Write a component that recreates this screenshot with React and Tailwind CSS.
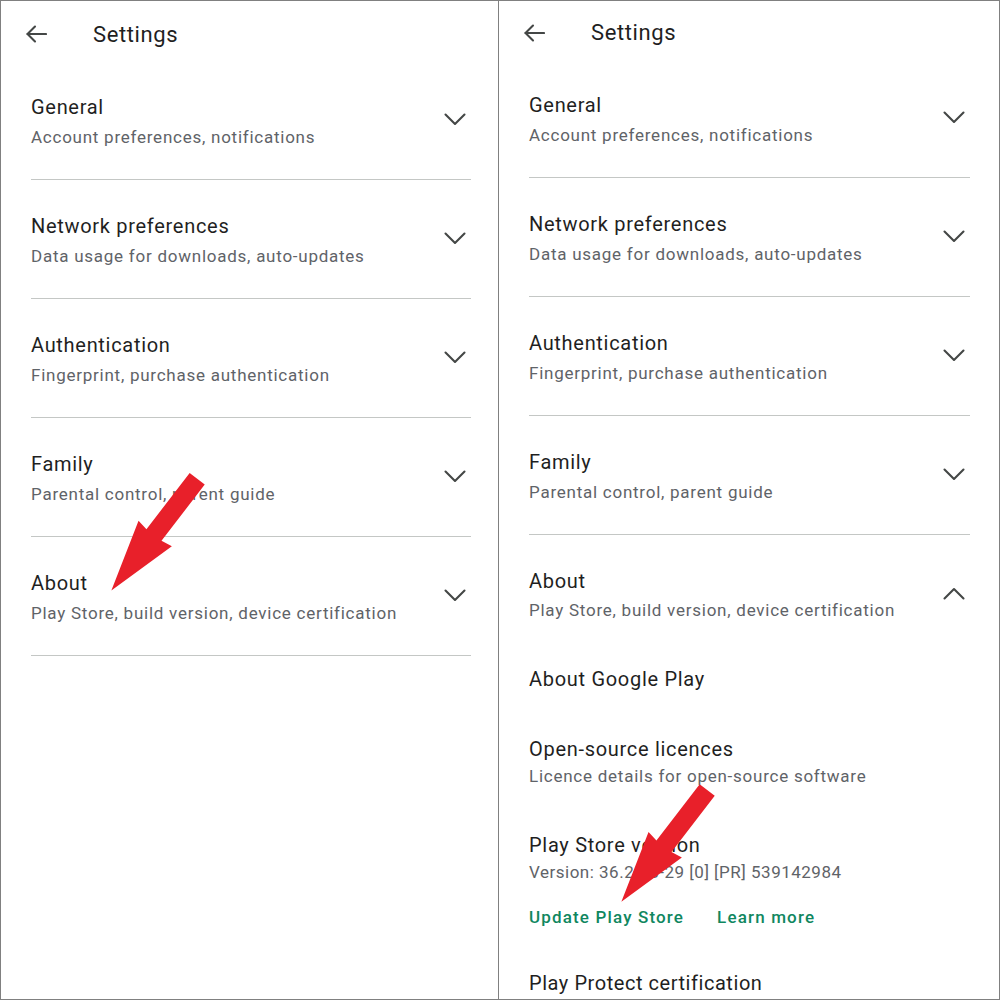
const sections = [
  { title: "General", sub: "Account preferences, notifications" },
  { title: "Network preferences", sub: "Data usage for downloads, auto-updates" },
  { title: "Authentication", sub: "Fingerprint, purchase authentication" },
  { title: "Family", sub: "Parental control, parent guide" },
  { title: "About", sub: "Play Store, build version, device certification" },
];

const titleCls = "text-[20px] leading-[28px] tracking-[0.7px] text-[#1f1f1f]";
const subCls = "text-[17px] leading-[24px] tracking-[0.75px] text-[#5f6368]";

function Chevron({ up }) {
  return (
    <svg width="22" height="13" viewBox="0 0 22 13" className="shrink-0 mt-[20px] mr-[5px]">
      <polyline
        points={up ? "1.5,11.5 11,2 20.5,11.5" : "1.5,1.5 11,11 20.5,1.5"}
        fill="none"
        stroke="#444746"
        strokeWidth="2.1"
        strokeLinecap="round"
        strokeLinejoin="round"
      />
    </svg>
  );
}

function BackArrow() {
  return (
    <svg width="22" height="18" viewBox="0 0 22 18" className="shrink-0">
      <line x1="2.5" y1="9" x2="21" y2="9" stroke="#444746" strokeWidth="2.1" strokeLinecap="round" />
      <polyline points="10,1.5 2.5,9 10,16.5" fill="none" stroke="#444746" strokeWidth="2.1" strokeLinecap="round" strokeLinejoin="round" />
    </svg>
  );
}

function Header({ h }) {
  return (
    <div className={`flex items-center pl-[24px] ${h}`}>
      <BackArrow />
      <span className="ml-[46px] text-[22px] tracking-[0.6px] text-[#1f1f1f]">Settings</span>
    </div>
  );
}

function Section({ title, sub, up }) {
  return (
    <div className="border-b border-[#c4c7c5]">
      <div className="flex items-start justify-between pt-[32px] pb-[30px]">
        <div>
          <div className={titleCls}>{title}</div>
          <div className={`mt-[4px] ${subCls}`}>{sub}</div>
        </div>
        <Chevron up={up} />
      </div>
    </div>
  );
}

function RedArrow({ x, y }) {
  return (
    <polygon
      transform={`translate(${x} ${y}) rotate(127.5)`}
      points="0,-9.5 71,-9.5 69,-21 141,0 69,21 71,9.5 0,9.5"
      fill="#e8202a"
    />
  );
}

export default function App() {
  return (
    <div className="relative w-[1000px] h-[1001px] bg-white font-['Roboto',sans-serif]">
      <div className="flex w-[1000px] h-[1000px] border border-[#808080] overflow-hidden">
        {/* left screen */}
        <div className="w-[498px] shrink-0 border-r border-[#808080]">
          <Header h="h-[66px]" />
          <div className="pl-[30px] pr-[27px] -mt-[6px]">
            {sections.map((s) => (
              <Section key={s.title} {...s} />
            ))}
          </div>
        </div>

        {/* right screen */}
        <div className="flex-1 overflow-hidden">
          <Header h="h-[63px]" />
          <div className="pl-[30px] pr-[29px] -mt-[5px]">
            {sections.slice(0, 4).map((s) => (
              <Section key={s.title} {...s} />
            ))}
            <div className="flex items-start justify-between pt-[32px]">
              <div>
                <div className={titleCls}>About</div>
                <div className={`mt-[3px] ${subCls}`}>Play Store, build version, device certification</div>
              </div>
              <Chevron up />
            </div>
            <div className={`mt-[43px] ${titleCls}`}>About Google Play</div>
            <div className={`mt-[42px] ${titleCls}`}>Open-source licences</div>
            <div className={`mt-[1px] ${subCls} tracking-[0.9px]`}>Licence details for open-source software</div>
            <div className={`mt-[43px] ${titleCls}`}>Play Store version</div>
            <div className="mt-[1px] text-[17px] leading-[24px] tracking-[0.5px] text-[#5f6368]">
              Version: 36.2.18-29 [0] [PR] 539142984
            </div>
            <div className="mt-[21px] flex gap-[33px] text-[17px] leading-[24px] font-medium tracking-[1.15px] text-[#10875f]">
              <span>Update Play Store</span>
              <span>Learn more</span>
            </div>
            <div className="mt-[40px] text-[20px] leading-[28px] tracking-[0.55px] text-[#1f1f1f]">Play Protect certification</div>
          </div>
        </div>
      </div>

      {/* annotation arrows */}
      <svg className="absolute inset-0 pointer-events-none" width="1000" height="1001">
        <RedArrow x={197.2} y={478.7} />
        <RedArrow x={707.2} y={790} />
      </svg>
    </div>
  );
}
